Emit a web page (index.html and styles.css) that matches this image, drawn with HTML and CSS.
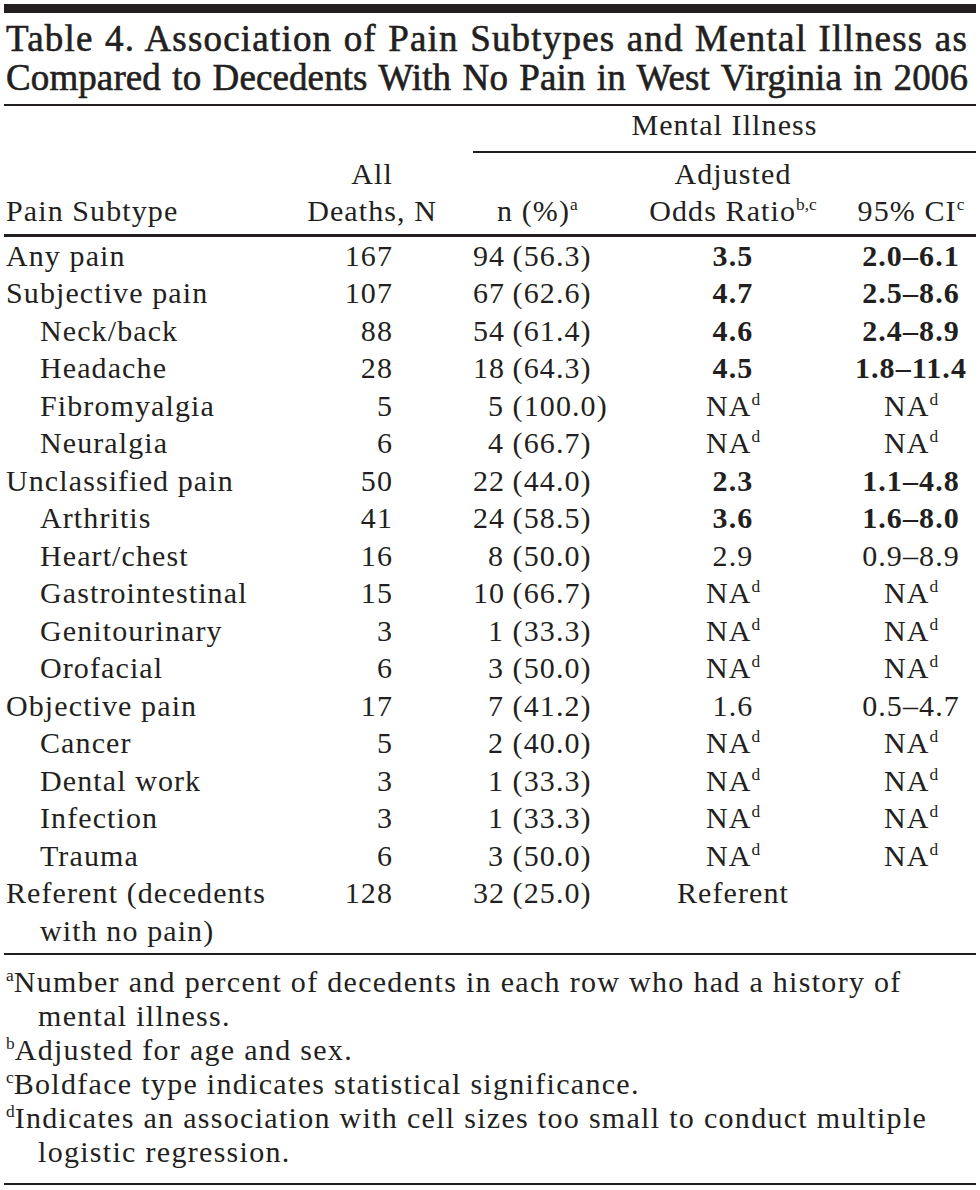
FILE: index.html
```html
<!DOCTYPE html>
<html lang="en">
<head>
<meta charset="utf-8">
<title>Table 4</title>
<link rel="stylesheet" href="styles.css">
</head>
<body>
<div class="page">
  <div class="topbar"></div>
  <h1 class="title"><span class="tline t1">Table 4. Association of Pain Subtypes and Mental Illness as</span><span class="tline t2">Compared to Decedents With No Pain in West Virginia in 2006</span></h1>
  <table class="data">
    <colgroup>
      <col class="c1"><col class="c2"><col class="c3"><col class="c4"><col class="c5">
    </colgroup>
    <thead>
      <tr class="hrow1">
        <th></th><th></th>
        <th colspan="3" class="group">Mental Illness</th>
      </tr>
      <tr class="hrow2">
        <th class="name">Pain Subtype</th>
        <th class="deaths"><span class="stack">All<br>Deaths, N</span></th>
        <th class="npct">n (%)<sup>a</sup></th>
        <th class="ctr">Adjusted<br>Odds Ratio<sup>b,c</sup></th>
        <th class="ctr">95% CI<sup>c</sup></th>
      </tr>
    </thead>
    <tbody>
      <tr><td class="name">Any pain</td><td class="num">167</td><td class="np"><span class="cnt">94</span> (56.3)</td><td class="ctr b">3.5</td><td class="ctr b">2.0–6.1</td></tr>
      <tr><td class="name">Subjective pain</td><td class="num">107</td><td class="np"><span class="cnt">67</span> (62.6)</td><td class="ctr b">4.7</td><td class="ctr b">2.5–8.6</td></tr>
      <tr><td class="name sub">Neck/back</td><td class="num">88</td><td class="np"><span class="cnt">54</span> (61.4)</td><td class="ctr b">4.6</td><td class="ctr b">2.4–8.9</td></tr>
      <tr><td class="name sub">Headache</td><td class="num">28</td><td class="np"><span class="cnt">18</span> (64.3)</td><td class="ctr b">4.5</td><td class="ctr b">1.8–11.4</td></tr>
      <tr><td class="name sub">Fibromyalgia</td><td class="num">5</td><td class="np"><span class="cnt">5</span> (100.0)</td><td class="ctr">NA<sup>d</sup></td><td class="ctr">NA<sup>d</sup></td></tr>
      <tr><td class="name sub">Neuralgia</td><td class="num">6</td><td class="np"><span class="cnt">4</span> (66.7)</td><td class="ctr">NA<sup>d</sup></td><td class="ctr">NA<sup>d</sup></td></tr>
      <tr><td class="name">Unclassified pain</td><td class="num">50</td><td class="np"><span class="cnt">22</span> (44.0)</td><td class="ctr b">2.3</td><td class="ctr b">1.1–4.8</td></tr>
      <tr><td class="name sub">Arthritis</td><td class="num">41</td><td class="np"><span class="cnt">24</span> (58.5)</td><td class="ctr b">3.6</td><td class="ctr b">1.6–8.0</td></tr>
      <tr><td class="name sub">Heart/chest</td><td class="num">16</td><td class="np"><span class="cnt">8</span> (50.0)</td><td class="ctr">2.9</td><td class="ctr">0.9–8.9</td></tr>
      <tr><td class="name sub">Gastrointestinal</td><td class="num">15</td><td class="np"><span class="cnt">10</span> (66.7)</td><td class="ctr">NA<sup>d</sup></td><td class="ctr">NA<sup>d</sup></td></tr>
      <tr><td class="name sub">Genitourinary</td><td class="num">3</td><td class="np"><span class="cnt">1</span> (33.3)</td><td class="ctr">NA<sup>d</sup></td><td class="ctr">NA<sup>d</sup></td></tr>
      <tr><td class="name sub">Orofacial</td><td class="num">6</td><td class="np"><span class="cnt">3</span> (50.0)</td><td class="ctr">NA<sup>d</sup></td><td class="ctr">NA<sup>d</sup></td></tr>
      <tr><td class="name">Objective pain</td><td class="num">17</td><td class="np"><span class="cnt">7</span> (41.2)</td><td class="ctr">1.6</td><td class="ctr">0.5–4.7</td></tr>
      <tr><td class="name sub">Cancer</td><td class="num">5</td><td class="np"><span class="cnt">2</span> (40.0)</td><td class="ctr">NA<sup>d</sup></td><td class="ctr">NA<sup>d</sup></td></tr>
      <tr><td class="name sub">Dental work</td><td class="num">3</td><td class="np"><span class="cnt">1</span> (33.3)</td><td class="ctr">NA<sup>d</sup></td><td class="ctr">NA<sup>d</sup></td></tr>
      <tr><td class="name sub">Infection</td><td class="num">3</td><td class="np"><span class="cnt">1</span> (33.3)</td><td class="ctr">NA<sup>d</sup></td><td class="ctr">NA<sup>d</sup></td></tr>
      <tr><td class="name sub">Trauma</td><td class="num">6</td><td class="np"><span class="cnt">3</span> (50.0)</td><td class="ctr">NA<sup>d</sup></td><td class="ctr">NA<sup>d</sup></td></tr>
      <tr class="last"><td class="name hang">Referent (decedents<br>with no pain)</td><td class="num">128</td><td class="np"><span class="cnt">32</span> (25.0)</td><td class="ctr">Referent</td><td class="ctr"></td></tr>
    </tbody>
  </table>
  <div class="notes">
    <p class="note"><sup>a</sup>Number and percent of decedents in each row who had a history of<br>mental illness.</p>
    <p class="note"><sup>b</sup>Adjusted for age and sex.</p>
    <p class="note"><sup>c</sup>Boldface type indicates statistical significance.</p>
    <p class="note"><sup>d</sup>Indicates an association with cell sizes too small to conduct multiple<br>logistic regression.</p>
  </div>
</div>
</body>
</html>
```

FILE: styles.css
```css
html, body {
  margin: 0;
  padding: 0;
  background: #ffffff;
}

body {
  font-family: "Liberation Serif", "Times New Roman", serif;
  color: #231f20;
}

.page {
  width: 972px;
  margin-left: 4px;
  padding-top: 4px;
}

.topbar {
  height: 9px;
  background: #231f20;
}

.title {
  margin: 0;
  padding: 6px 0 7px 2px;
  font-size: 37px;
  line-height: 39px;
  font-weight: normal;
  -webkit-text-stroke: 0.6px #231f20;
  border-bottom: 2px solid #231f20;
}

.tline {
  display: block;
  width: 962px;
  white-space: nowrap;
  text-align: justify;
  text-align-last: justify;
}

.t1 {
  letter-spacing: 1.2px;
}

.t2 {
  letter-spacing: 0.1px;
}

.data {
  width: 972px;
  border-collapse: separate;
  border-spacing: 0;
  table-layout: fixed;
  font-size: 30px;
  line-height: 37.5px;
  letter-spacing: 1.1px;
}

.c1 { width: 296px; }
.c2 { width: 173px; }
.c3 { width: 147px; }
.c4 { width: 226px; }
.c5 { width: 130px; }

th, td {
  padding: 0;
  font-weight: normal;
  vertical-align: bottom;
  white-space: nowrap;
}

.hrow1 th {
  padding-bottom: 7px;
}

.hrow1 .group {
  text-align: center;
  border-bottom: 2px solid #231f20;
}

.hrow2 th {
  padding-top: 2px;
  padding-bottom: 4px;
  border-bottom: 3px solid #231f20;
}

.name {
  text-align: left;
  padding-left: 2px;
}

.name.sub {
  padding-left: 36px;
}

.hang {
  white-space: normal;
  padding-left: 36px;
  text-indent: -34px;
}

.deaths {
  text-align: right;
  padding-right: 36px;
}

.stack {
  display: inline-block;
  text-align: center;
}

.npct {
  text-align: left;
  padding-left: 24px;
}

.ctr {
  text-align: center;
}

.num {
  text-align: right;
  padding-right: 80px;
}

.np {
  text-align: left;
}

.cnt {
  display: inline-block;
  width: 31px;
  text-align: right;
}

.b {
  font-weight: bold;
}

.last td {
  padding-bottom: 4px;
  border-bottom: 2px solid #231f20;
  vertical-align: top;
}

sup {
  font-size: 0.58em;
  line-height: 0;
  letter-spacing: 0;
  vertical-align: 0.62em;
}

.notes {
  padding: 10px 0 14px 0;
  border-bottom: 2px solid #231f20;
}

.note {
  margin: 0;
  font-size: 30px;
  line-height: 34px;
  letter-spacing: 1.3px;
  padding-left: 34px;
  text-indent: -32px;
  white-space: nowrap;
}
```
